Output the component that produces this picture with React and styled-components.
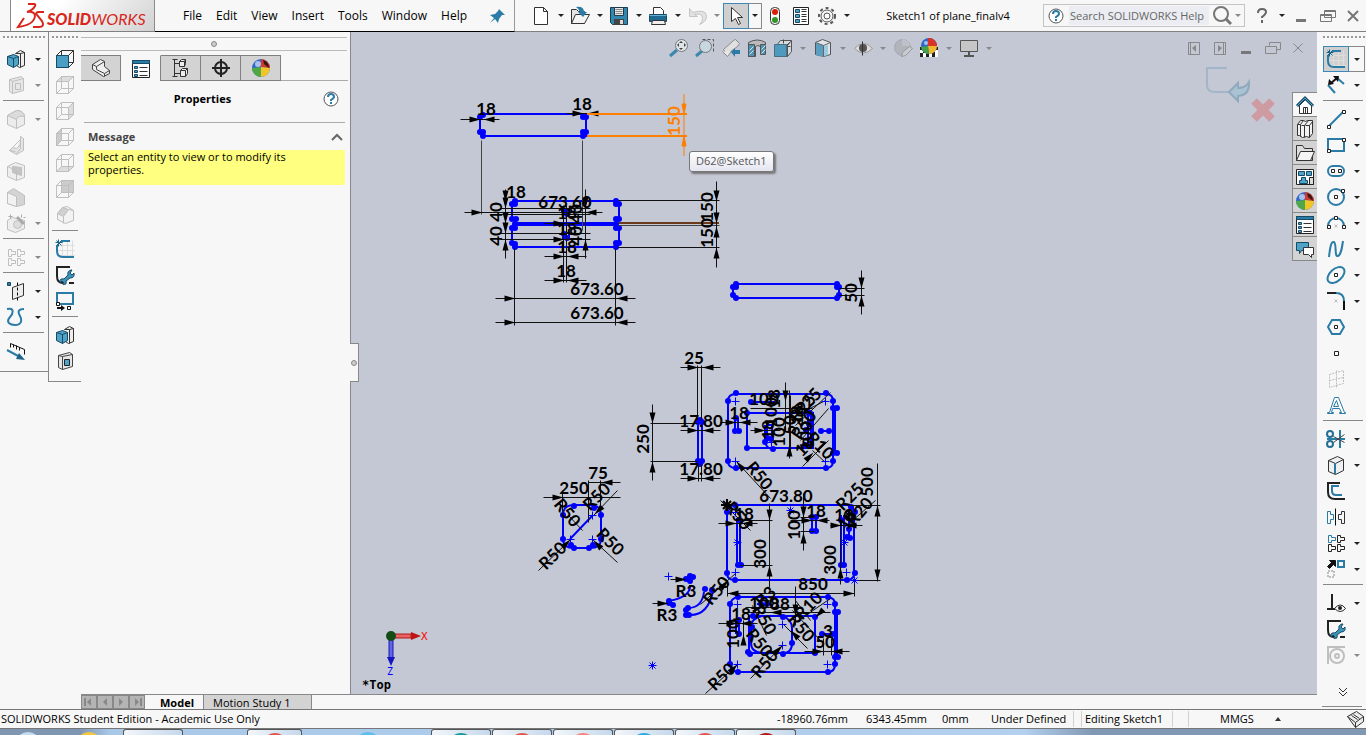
import React from "react";
import styled, { createGlobalStyle } from "styled-components";

const BLUE = "#2a7ca6";
const DARK = "#333";
const PALE = "#bfbfbf";
const INK = "#0000ff";

const GlobalStyle = createGlobalStyle`
  * { box-sizing: border-box; }
  body { margin: 0; overflow: hidden; }
  button { border: 0; padding: 0; margin: 0; background: none; font: inherit; color: inherit; }
`;

const Page = styled.div`
  display: flex;
  flex-direction: column;
  height: 100vh;
  background: #f7f7f7;
  color: #000;
  font: 12px/16px "Open Sans", "Noto Sans", sans-serif;
`;

/* ---------- icons ---------- */

const box = "M3 7h11v11H3zM3 7l4-5h11v11l-4 5M14 7l4-5";
const cubeLines = "M1 6h12v12H1zM1 6l5-5h12v12l-5 5M13 6l5-5M6 1v12h12M6 13l-5 5";
const tee = (x, y) => `M${x} ${y}h3v2h4v3h-4v2h-3z`;

const icons = {
  extrude: (
    <>
      <path d="M9 4l5-3 4 2v13l-5 2-3-2" fill="#eee" stroke={DARK} />
      <path d="M14 4v14M14 4l4-1M9 4l5 0" fill="none" stroke={DARK} />
      <path d="M1 7l6-2 5 2v8l-5 3-6-3z" fill="#4fa3c7" stroke="#174a66" />
      <path d="M1 7l6 2 5-2M7 9v9" fill="none" stroke="#174a66" />
    </>
  ),
  cutGrey: (
    <>
      <path d="M3 4l12-3 2 2v12l-11 3-3-2z" fill="#e6e6e6" stroke={PALE} />
      <path d="M6 6l11-3M6 6v12M3 4l3 2M9 8h5v6H9z" fill="none" stroke={PALE} />
    </>
  ),
  cut: (
    <>
      <path d="M3 4l11-3 3 2v12l-10 3-4-2z" fill="#e6e6e6" stroke="#444" />
      <path d="M7 5l10-2M7 5v13M3 4l4 1" fill="none" stroke="#444" />
      <path d="M9 8h5v6H9z" fill="#4fa3c7" stroke="#222" />
    </>
  ),
  fillet3d: (
    <>
      <path d="M1 6l9-5c5 0 8 3 8 6v8l-8 4-9-4z" fill="#ececec" stroke={PALE} />
      <path d="M1 6l9-5c5 0 8 3 8 6-4-1-7 0-8 3z" fill="#dcdcdc" stroke={PALE} />
      <path d="M10 10v9" stroke={PALE} />
    </>
  ),
  rib: <path d="M14 1l3 2v12l-7 4-7-4 3-3 4 1 4-4zM14 1v12l-4 5M6 12l8-8M3 15l6 1" fill="#e4e4e4" stroke={PALE} />,
  shell: (
    <>
      <path d="M1 5l8-4 9 3v12l-8 3-9-4z" fill="#eee" stroke={PALE} />
      <path d="M6 5l9 1v8l-9-3z" fill="#c4c4c4" stroke={PALE} />
      <path d="M1 5l9 4v10" fill="none" stroke={PALE} />
    </>
  ),
  draft: (
    <>
      <path d="M1 5l6-4 11 7v9l-8 2-9-3z" fill="#d4d4d4" stroke={PALE} />
      <path d="M1 5l9 4v10l-9-3z" fill="#f2f2f2" stroke={PALE} />
    </>
  ),
  hole: (
    <>
      <path d="M1 7l5-3 12 3v8l-9 4-8-3z" fill="#eee" stroke={PALE} />
      <circle cx="11" cy="11" r="4" fill="#ddd" stroke={PALE} />
      <path d="M11 4l7 7" stroke="#aaa" strokeWidth="3" />
      <path d="M4 1v4M2 3h4M15 1v3M17 4h2" stroke="#aaa" />
    </>
  ),
  patternGrey: (
    <path d={tee(2, 2) + tee(11, 2) + tee(2, 11) + tee(11, 11)} fill="none" stroke={PALE} />
  ),
  plane: (
    <>
      <path d="M6 6l11-4v12L6 18z" fill="#ededed" stroke={DARK} />
      <path d="M11 1v18" stroke="#000" strokeDasharray="3 2" />
      <path d="M1 1h3v3H1z" fill={BLUE} stroke="#174a66" />
    </>
  ),
  curve: <path d="M1 2c8-2 6 5 3 8-5 6 1 8 5 8 7 0 7-5 5-9-3-5-1-7 4-7" fill="none" stroke={BLUE} strokeWidth="2" />,
  measure: (
    <>
      <path d="M4 6V2l14 6v5M7 3v3M10 4v4M13 6v3" fill="none" stroke="#111" />
      <path d="M1 9l13 7" stroke={BLUE} strokeWidth="2" />
      <path d="M13 12l6 7-9-1z" fill="#1f6488" />
    </>
  ),
  cubeFront: (
    <>
      <path d={cubeLines} fill="none" stroke={DARK} />
      <path d="M1 6h12v12H1z" fill="#4c9fc4" stroke="#174a66" />
    </>
  ),
  cubeTop: <><path d="M1 6l5-5h12l-5 5z" fill="#ddd" stroke={PALE} /><path d={cubeLines} fill="none" stroke={PALE} /></>,
  cubeRight: <><path d="M13 6l5-5v12l-5 5z" fill="#ddd" stroke={PALE} /><path d={cubeLines} fill="none" stroke={PALE} /></>,
  cubeLeft: <><path d="M1 6l5-5v12l-5 5z" fill="#ccc" stroke={PALE} /><path d={cubeLines} fill="none" stroke={PALE} /></>,
  cubeBottom: <><path d="M1 18l5-5h12l-5 5z" fill="#ddd" stroke={PALE} /><path d={cubeLines} fill="none" stroke={PALE} /></>,
  cubeBack: <><path d="M6 1h12v12H6z" fill="#ccc" stroke={PALE} /><path d={cubeLines} fill="none" stroke={PALE} /></>,
  iso: (
    <>
      <path d="M2 8l5-6 5-1 6 4v10l-8 3-8-4z" fill="#f2f2f2" stroke={PALE} />
      <path d="M2 8l5-6 6 2-5 7z" fill="#d0d0d0" stroke={PALE} />
      <path d="M13 4l5 1M8 11l0 7" fill="none" stroke={PALE} />
    </>
  ),
  sketch: (
    <>
      <path d="M7 1v17M12 1v17M17 1v17M2 6h17M2 11h17M2 16h17" stroke="#ddd" />
      <path d="M6 2h9M2 6v6q0 6 6 6h11" fill="none" stroke={BLUE} strokeWidth="2" />
      <path d="M0 3h7M3 0v7M1 1l5 5M6 1L1 6" stroke="#1b6288" />
    </>
  ),
  repair: (
    <>
      <path d="M15 2H2v9q0 7 6 7M14 18h5" fill="none" stroke="#222" strokeWidth="2" />
      <path
        d="M9 14l4-4q-1-4 3-5l1 0-2 3 2 2 2-2q1 5-4 5l-4 3q1 4-3 4l1-2-2-2-2 2q-1-5 4-4z"
        fill="#3f93b9"
        stroke="#174a66"
        strokeWidth="1"
      />
    </>
  ),
  convert: (
    <>
      <path d="M2 2h16v11H2z" fill="none" stroke={BLUE} strokeWidth="2" />
      <path d="M1 11h3v3H1zM12 15h3v3h-3z" fill="#fff" stroke="#111" />
      <path d="M2 16h4v-2l4 3-4 3v-2H2z" fill="#111" />
    </>
  ),
  dimension: (
    <>
      <path d="M10 2l8 7M2 10l7 8" stroke={BLUE} strokeWidth="2" />
      <path d="M4 9l7-6" stroke="#111" strokeWidth="2" />
      <path d="M2 10l1-6 5 5zM7 1h6l-1 6z" fill="#111" />
    </>
  ),
  line: (
    <>
      <path d="M2 18L18 2" stroke={BLUE} strokeWidth="2" />
      <path d="M1 16h3v3H1zM16 1h3v3h-3z" fill="#fff" stroke="#222" />
    </>
  ),
  rect: (
    <>
      <path d="M2 4h16v12H2z" fill="none" stroke={BLUE} strokeWidth="2" />
      <path d="M1 14h3v3H1zM16 3h3v3h-3z" fill="#fff" stroke="#222" />
    </>
  ),
  slot: (
    <>
      <rect x="2" y="5" width="16" height="10" rx="5" fill="none" stroke={BLUE} strokeWidth="2" />
      <path d="M5 8h3v3H5zM12 8h3v3h-3z" fill="#fff" stroke="#222" />
    </>
  ),
  circle: (
    <>
      <circle cx="10" cy="10" r="8" fill="none" stroke={BLUE} strokeWidth="2" />
      <path d="M8 8h3v3H8zM15 2h3v3h-3z" fill="#fff" stroke="#222" />
    </>
  ),
  arc: (
    <>
      <path d="M2 13a8 8 0 0 1 16 0" fill="none" stroke={BLUE} strokeWidth="2" />
      <path d="M8 3h3v3H8zM1 12h3v3H1zM16 12h3v3h-3z" fill="#fff" stroke="#222" />
      <path d="M8 11l3 3M11 11l-3 3" stroke="#bbb" />
    </>
  ),
  spline: <path d="M3 18C4 9 5 2 8 3c3 2 0 15 4 14 3-1 4-8 5-15" fill="none" stroke={BLUE} strokeWidth="2" />,
  ellipse: (
    <>
      <ellipse cx="10" cy="10" rx="10" ry="6" transform="rotate(-42 10 10)" fill="none" stroke={BLUE} strokeWidth="2" />
      <path d="M8 8h3v3H8z" fill="#fff" stroke="#222" />
    </>
  ),
  fillet: (
    <>
      <path d="M1 2h9" stroke="#222" strokeWidth="2" />
      <path d="M10 2q8 0 8 8" fill="none" stroke={BLUE} strokeWidth="2" />
      <path d="M18 10v9" stroke="#111" strokeWidth="2" />
      <path d="M8 8l3 3M11 8l-3 3" stroke="#bbb" />
    </>
  ),
  polygon: (
    <>
      <path d="M6 3h8l4 7-4 7H6l-4-7z" fill="none" stroke={BLUE} strokeWidth="2" />
      <path d="M8 8h3v3H8z" fill="#fff" stroke="#222" />
    </>
  ),
  point: <path d="M8 8h4v4H8z" fill="#fff" stroke="#222" />,
  planeGrey: <path d="M3 5l14-4v13L3 18zM10 1v18M3 11l14-3" fill="none" stroke={PALE} strokeDasharray="2 1" />,
  text: <path d="M1 18h6v-1l-2-0 1-4h7l2 4-2 0v1h6v-1h-1L12 2H8L3 17H1zM7 11l3-6 2 6z" fill="#fff" stroke={BLUE} />,
  trim: (
    <>
      <path d="M1 10h18M14 1v18" stroke={BLUE} strokeWidth="2" />
      <path d="M7 7l11 6M7 13l11-8" stroke="#444" />
      <circle cx="4" cy="5" r="3" fill="none" stroke="#236f96" strokeWidth="2" />
      <circle cx="4" cy="15" r="3" fill="none" stroke="#236f96" strokeWidth="2" />
    </>
  ),
  solid: (
    <>
      <path d="M2 5l9-4 6 3v11l-8 4-7-3z" fill="#f0f0f0" stroke="#333" />
      <path d="M2 5l7 3 8-4" fill="none" stroke="#333" />
      <path d="M9 8v11" stroke={BLUE} strokeWidth="2" />
    </>
  ),
  offset: (
    <>
      <path d="M14 2H2v9q0 7 7 7h10" fill="none" stroke="#222" strokeWidth="2" />
      <path d="M13 5H6v5q0 4 4 4h6" fill="none" stroke={BLUE} strokeWidth="2" />
    </>
  ),
  mirror: (
    <>
      <path d="M1 4h3v3h3v5H4v4H1z" fill="none" stroke={BLUE} />
      <path d="M18 4h-3v3h-3v5h3v4h3z" fill="none" stroke="#333" />
      <path d="M9 1v17" stroke="#111" />
    </>
  ),
  pattern: (
    <>
      <path d={tee(2, 2)} fill="none" stroke={BLUE} />
      <path d={tee(11, 2) + tee(2, 11) + tee(11, 11)} fill="none" stroke="#222" />
    </>
  ),
  move: (
    <>
      <path d="M1 7l4-4-2-2h6v6L7 5 3 9z" fill="#111" stroke="#111" />
      <path d="M12 2h6v6h-6z" fill="none" stroke={BLUE} strokeWidth="2" />
      <path d="M2 12h6v6H2z" fill="none" stroke={PALE} strokeWidth="2" strokeDasharray="2 1" />
    </>
  ),
  relations: (
    <>
      <path d="M6 1v15M1 16h8" stroke="#222" strokeWidth="2" />
      <path d="M8 15q6-7 11 0-5 6-11 0z" fill="#fff" stroke="#222" />
      <circle cx="14" cy="15" r="2" fill="#222" />
    </>
  ),
  ringGrey: (
    <>
      <path d="M2 19V2h17" fill="none" stroke={PALE} strokeWidth="2" />
      <circle cx="11" cy="11" r="7" fill="none" stroke={PALE} strokeWidth="2" />
      <circle cx="11" cy="11" r="2" fill="none" stroke={PALE} strokeWidth="2" />
    </>
  ),
  newDoc: <path d="M3 1h9l4 4v13H3zM12 1v4h4" fill="#fff" stroke="#333" />,
  open: (
    <>
      <path d="M1 17V3h5l2 2h6v12z" fill="#e4e4e4" stroke="#333" />
      <path d="M1 17L5 8h14l-5 9z" fill="#f4f4f4" stroke="#333" />
      <path d="M6 1q8-1 8 5h3l-4 5-5-5h2q-1-3-4-5z" fill={BLUE} />
    </>
  ),
  save: (
    <>
      <path d="M1 1h17v17H3l-2-2z" fill="#3187ae" stroke="#1c3c4e" />
      <path d="M5 1h9v8H5z" fill="#e6e6e6" stroke="#1c3c4e" />
      <path d="M6 3h7M6 5h7M6 7h7" stroke="#888" />
      <path d="M5 13h10v6H5z" fill="#444" />
      <path d="M11 14h3v4h-3z" fill="#ddd" />
    </>
  ),
  print: (
    <>
      <path d="M5 9V1h7l3 3v5z" fill="#fff" stroke="#333" />
      <path d="M1 8h17v7H1z" fill="#1f6a90" stroke="#174a66" />
      <path d="M1 9h17" stroke="#61b2d2" />
      <path d="M4 14h12l1 4H3z" fill="#eee" stroke="#333" />
    </>
  ),
  undo: <path d="M2 2v8h8L7 8q8-2 8 4 0 3-3 6 7-3 7-8 0-8-14-4z" fill="#e2e2e2" stroke="#c4c4c4" />,
  cursor: <path d="M5 1v14l4-3 3 6 2-1-3-6h5z" fill="#fff" stroke="#333" />,
  traffic: (
    <>
      <rect x="5" y="1" width="9" height="17" rx="4" fill="#f7f7f7" stroke="#333" />
      <circle cx="10" cy="6" r="3" fill="#d81e05" />
      <circle cx="10" cy="14" r="3" fill="#2f9626" />
    </>
  ),
  options: (
    <>
      <path d="M2 1h15v17H2z" fill="#fff" stroke="#222" />
      <path d="M4 3h4v3H4zM4 8h4v3H4zM4 13h4v3H4z" fill="#4fa3c7" stroke="#174a66" />
      <path d="M10 3h5M10 5h5M10 8h5M10 10h5M10 13h5M10 15h5" stroke="#333" />
    </>
  ),
  gear: (
    <>
      <circle cx="10" cy="10" r="8" fill="none" stroke="#555" strokeDasharray="3 3" strokeWidth="2" />
      <circle cx="10" cy="10" r="6" fill="#f7f7f7" stroke="#555" strokeWidth="1" />
      <circle cx="10" cy="10" r="3" fill="#fff" stroke="#555" strokeWidth="1" />
    </>
  ),
  pin: <path d="M11 3l6 6-3 0-3 4-1 4-3-4-5 4 4-5-4-3 5-1 3-3z" fill={BLUE} />,
  help: (
    <>
      <circle cx="10" cy="10" r="7" fill="#fff" stroke="#555" strokeWidth="1" />
      <path d="M7 8q0-3 3-3t3 3q0 1-3 3v1M10 13v2" fill="none" stroke={BLUE} strokeWidth="2" />
    </>
  ),
  query: <path d="M6 7q0-4 4-4t4 3q0 2-4 5v1M10 14v3" fill="none" stroke="#666" strokeWidth="2" />,
  glass: (
    <>
      <circle cx="9" cy="8" r="7" fill="none" stroke="#777" strokeWidth="2" />
      <path d="M14 13l5 5" stroke="#777" strokeWidth="3" />
    </>
  ),
  minimize: <path d="M5 13h10v3H5z" fill="#777" />,
  restore: <path d="M7 4h11v7H7zM7 5h11M3 8h11v7H3zM3 9h11" fill="#f7f7f7" stroke="#777" />,
  restoreClear: <path d="M7 7V4h11v7h-4M3 8h11v7H3z" fill="none" stroke="#888" />,
  close: <path d="M5 5l10 10M15 5L5 15" stroke="#777" strokeWidth="2" />,
  closeThin: <path d="M5 5l9 9M14 5L5 14" stroke="#888" />,
  paneLeft: <><path d="M4 4h11v12H4zM6 4v12" fill="none" stroke="#888" /><path d="M12 7v7l-4-4z" fill="#888" /></>,
  paneRight: <><path d="M4 4h11v12H4zM13 4v12" fill="none" stroke="#888" /><path d="M8 7v7l4-4z" fill="#888" /></>,
  zoomFit: (
    <>
      <path d="M1 18l7-6" stroke="#3d87aa" strokeWidth="3" />
      <circle cx="12" cy="7" r="6" fill="#dde4ea" stroke="#777" />
      <path d="M12 3l2 2h-4zM12 12l2-2h-4zM8 7l2-2v4zM17 7l-2-2v4z" fill="#444" />
    </>
  ),
  zoomArea: (
    <>
      <path d="M7 1h11v12" fill="none" stroke="#555" strokeDasharray="3 2" />
      <path d="M1 18l6-5" stroke="#3d87aa" strokeWidth="3" />
      <circle cx="10" cy="8" r="6" fill="#c8d6df" stroke="#777" />
    </>
  ),
  prevView: (
    <>
      <path d="M2 11l10-9 2-1 4 4-2 3-11 8z" fill="#e0e0e0" stroke="#888" />
      <path d="M1 13l5 5 4-5" fill="#e8e8e8" stroke="#888" />
      <path d="M10 14l4-4v2h5v4h-5v3z" fill={BLUE} />
    </>
  ),
  section: (
    <>
      <path d="M1 4q9-5 17 0v11h-5V8q-3-2-5 0v10H1z" fill="#bbb" stroke="#555" />
      <path d="M1 6h6v12H1zM13 6h5v10h-5z" fill="#4e93b3" stroke="#555" />
      <path d="M2 12l4-4M2 16l4-4M14 11l4-4M14 15l4-4" stroke="#d7e8f0" />
    </>
  ),
  viewCube: (
    <>
      <path d={box} fill="#d5dade" stroke="#555" />
      <path d="M1 6h12v12H1z" fill="#4e9abf" stroke="#4a6f85" />
      <path d="M10 1v4M17 8h-3M16 4l-3 3" stroke="#444" />
    </>
  ),
  display: (
    <>
      <path d="M2 4l7-3 8 3v12l-7 2-8-2z" fill="#dfe5e8" stroke="#555" />
      <path d="M3 5l7 2v12l-7-2z" fill="#5a9fbf" />
      <path d="M11 8l4-1v10l-4 1z" fill="#9ccae0" />
      <path d="M10 7v11M10 7l7-3M2 4l8 3" fill="none" stroke="#666" />
    </>
  ),
  eye: (
    <>
      <path d="M1 10q9-10 18 0-9 9-18 0z" fill="#ddd" stroke="#999" />
      <circle cx="10" cy="10" r="4" fill="#555" />
      <path d="M9 3v14" stroke="#333" />
    </>
  ),
  ballEdit: (
    <>
      <circle cx="9" cy="9" r="8" fill="#b0b4bb" stroke="#a4a8b0" />
      <path d="M9 1q8 1 8 8-4-2-8-1z" fill="#bec1c8" />
      <path d="M8 18l1-4 7-6 3 2-7 7z" fill="#c9ccd3" stroke="#999" />
    </>
  ),
  scene: (
    <>
      <path d="M1 9h18v10H1z" fill="#fff" />
      <path d="M1 9h3v3H1zM16 9h3v3h-3zM4 12h3v3H4zM13 12h3v3h-3zM1 15h3v4H1zM7 15h3v4H7zM13 15h3v4h-3z" fill="#222" />
      <circle cx="10" cy="8" r="8" fill="#2e67c6" />
      <path d="M9 8V0a8 8 0 0 1 9 8z" fill="#d93226" />
      <path d="M9 8h9a8 8 0 0 1-8 8z" fill="#f0b92c" />
      <path d="M9 8l1 8a8 8 0 0 1-8-7z" fill="#45a047" />
      <circle cx="7" cy="5" r="2" fill="#dce8fa" opacity="0.7" />
    </>
  ),
  monitor: (
    <>
      <path d="M1 2h17v11H1z" fill="#c6c6c6" stroke="#555" />
      <path d="M10 14v4M5 18h10" stroke="#555" strokeWidth="2" />
    </>
  ),
  ball: (
    <>
      <circle cx="10" cy="10" r="9" fill="#3169d0" />
      <path d="M10 1a9 9 0 0 1 9 9L10 9z" fill="#d33a2c" />
      <path d="M19 10a9 9 0 0 1-9 9V9z" fill="#f3c628" />
      <path d="M1 10l9-1v10a9 9 0 0 1-9-9z" fill="#4fa845" />
      <path d="M12 2q6 2 6 8l-5-4z" fill="#3b1512" />
      <circle cx="7" cy="6" r="3" fill="#dce8fa" opacity="0.7" />
    </>
  ),
  part: (
    <>
      <path d="M1 6l8-5 4 2v5l5 4v3l-6 3L1 11z" fill="#eee" stroke="#444" />
      <path d="M1 6l4 2 8-5M5 8v3l8 4 5-3M13 15v3" fill="none" stroke="#444" />
    </>
  ),
  list: (
    <>
      <path d="M1 1h17v17H1z" fill="#fff" stroke="#222" />
      <path d="M1 1h17v3H1z" fill={BLUE} stroke="#174a66" />
      <path d="M3 7h3v2H3zM3 11h3v2H3zM3 15h3v2H3z" fill="#4fa3c7" stroke="#174a66" />
      <path d="M8 8h8M8 12h8M8 16h8" stroke="#333" />
    </>
  ),
  config: (
    <>
      <path d="M3 1v17M3 5h5M3 15h6M1 1h5M1 18h5" fill="none" stroke="#333" />
      <path d="M8 3l2-2h4v4l-1 3H8zM9 12l2-2h5v5l-2 3H9z" fill="#eee" stroke="#333" />
      <path d="M8 3h5v5M13 3l1-2M9 12h5v6M14 12l2-2" fill="none" stroke="#333" />
    </>
  ),
  target: (
    <>
      <circle cx="10" cy="10" r="6" fill="none" stroke="#222" strokeWidth="2" />
      <path d="M10 1v18M1 10h18" stroke="#222" strokeWidth="2" />
    </>
  ),
  home: (
    <>
      <path d="M4 10v8h12v-8l-6-6z" fill="#fff" stroke="#333" />
      <path d="M2 11l8-8 8 8" fill="none" stroke="#174a66" strokeWidth="3" />
      <path d="M2 11l8-8 8 8" fill="none" stroke="#4fa3c7" strokeWidth="1" />
      <path d="M8 18v-6h4v6M10 12v6" fill="none" stroke="#333" />
    </>
  ),
  books: (
    <>
      <path d="M2 5l3-4h3l2 1 2-1h5v13l-3 4-3-1-4 1-3-2-2 0z" fill="#f2f2f2" stroke="#333" />
      <path d="M2 5h3v12M5 5l3-4M6 6h3v12M9 6l4-5M10 6h4v12M14 6l3-4" fill="none" stroke="#333" />
    </>
  ),
  folder: (
    <>
      <path d="M1 17V2h6l2 3h8v12z" fill="#ddd" stroke="#333" />
      <path d="M1 17L5 8h14l-4 9z" fill="#f4f4f4" stroke="#333" />
    </>
  ),
  palette: (
    <>
      <path d="M1 2h17v15H1z" fill="#fff" stroke="#222" />
      <path d="M3 4h6v4H3zM11 4h5v4h-5zM6 10h4v3h2v3H4v-3h2z" fill="#4fa3c7" stroke="#174a66" />
      <path d="M14 10h4v7h-4z" fill="#ddd" stroke="#222" />
    </>
  ),
  forum: (
    <>
      <path d="M1 3h12v8H6l-2 3v-3H1z" fill="#4fa3c7" stroke="#174a66" />
      <path d="M8 8h10v7h-2v3l-3-3H8z" fill="#fff" stroke="#333" />
    </>
  ),
  tag: (
    <>
      <path d="M2 7l9-5 7 5v5l-8 6z" fill="#eee" stroke="#333" />
      <path d="M2 7l8 6 8-6M10 13v5" fill="none" stroke="#333" />
      <path d="M6 6l6 4M8 5l6 4" stroke="#333" />
    </>
  ),
};

const Svg = styled.svg`
  display: block;
  flex: none;
`;

// hairlines sit on half pixels so that they stay sharp
const Glyph = styled(Svg)`
  [stroke]:not([stroke-width]) { transform: translate(0.5px, 0.5px); }
`;

const Icon = ({ name }) => (
  <Glyph width="20" height="20" viewBox="0 0 20 20" aria-hidden="true">
    {icons[name]}
  </Glyph>
);

const Caret = styled.span`
  width: 0;
  height: 0;
  border: 3px solid transparent;
  border-bottom-width: 0;
  border-top-color: ${p => (p.$muted ? "#888" : "#222")};
`;

/* ---------- title bar ---------- */

const TitleBar = styled.header`
  display: flex;
  flex: none;
  height: 32px;
  border-bottom: 1px solid #808080;
`;

const Logo = styled.div`
  display: flex;
  align-items: center;
  width: 145px;
  margin-left: 10px;
  border: solid #8a8a8a;
  border-width: 0 1px;
  background: linear-gradient(135deg, #fff 30%, #d2d2d2);
  color: #d9261c;
  font: italic 400 16px/30px Lato, sans-serif;
  b { font-weight: 900; }
  span { margin-top: 7px; }
`;

const Menu = styled.nav`
  display: flex;
  align-items: center;
  gap: 14px;
  width: 360px;
  height: 32px;
  padding: 0 6px 0 28px;
  border-bottom: 1px solid #000;
  border-right: 1px solid #999;
  button:last-child { margin-left: auto; }
`;

const Tools = styled.div`
  display: flex;
  align-items: center;
  margin-left: ${p => p.$gap}px;
`;

const Tool = styled.button`
  display: flex;
  align-items: center;
  justify-content: center;
  width: 26px;
  height: 26px;
  flex: none;
  ${p => p.$on && "background: #d0d0d0; border: 1px solid #3c88b8;"}
`;

const Drop = styled.button`
  display: flex;
  align-items: center;
  justify-content: center;
  width: ${p => p.$w || 13}px;
  height: 26px;
  flex: none;
  ${p => p.$on && "border: 1px solid #888; border-left: 0;"}
`;

const DocName = styled.h1`
  flex: 1;
  margin: 0;
  text-align: center;
  font-size: 11px;
  font-weight: 400;
  line-height: 31px;
  white-space: nowrap;
`;

const Search = styled.label`
  display: flex;
  align-items: center;
  gap: 3px;
  width: 202px;
  height: 23px;
  margin-top: 4px;
  padding-left: 2px;
  border: 1px solid #c4c4c4;
  input {
    width: 140px;
    height: 19px;
    border: 0;
    padding: 0 1px;
    background: #ebedf2;
    font: 11px "Open Sans", sans-serif;
    outline: 0;
  }
  input::placeholder { color: #666; opacity: 1; }
`;

/* ---------- side toolbars ---------- */

const Body = styled.main`
  display: flex;
  flex: 1;
  min-height: 0;
`;

const Bar = styled.div`
  display: flex;
  flex-direction: column;
  align-self: flex-start;
  flex: none;
  width: ${p => p.$w}px;
  padding: 4px 0 ${p => (p.$flat ? 0 : 7)}px ${p => p.$pad}px;
  ${p => !p.$flat && "border-bottom: 1px solid #888;"}
  ${p => p.$edge && "border-right: 1px solid #888;"}
  ${p => p.$left && "border-left: 1px solid #888; margin-left: -1px;"}
`;

const Grip = styled.div`
  width: ${p => p.$w}px;
  height: 2px;
  margin-bottom: 8px;
  background: repeating-linear-gradient(90deg, #999 0 2px, transparent 2px 4px);
`;

const BarRow = styled.div`
  display: flex;
  height: 26px;
`;

const BarRule = styled.hr`
  width: ${p => p.$w}px;
  height: 1px;
  margin: 2px 0 5px;
  border: 0;
  background: #888;
`;

const RightDock = styled.div`
  display: flex;
  flex-direction: column;
  justify-content: space-between;
  align-items: center;
  width: 49px;
  flex: none;
  padding-bottom: 2px;
`;

const More = styled.button`
  width: 40px;
  height: 24px;
  padding-bottom: 6px;
  border-bottom: 1px solid #888;
`;

/* ---------- property panel ---------- */

const Center = styled.div`
  display: flex;
  flex-direction: column;
  flex: 1;
  min-width: 0;
`;

const Work = styled.div`
  display: flex;
  flex: 1;
  min-height: 0;
`;

const Panel = styled.section`
  position: relative;
  width: 270px;
  flex: none;
  border-right: 1px solid #888;
  padding-top: 5px;
`;

const PanelGrip = styled.div`
  display: flex;
  align-items: center;
  justify-content: center;
  height: 14px;
  margin-right: 3px;
  border: solid #bbb;
  border-width: 1px 0;
`;

const Dot = styled.i`
  width: 6px;
  height: 6px;
  border: 1px solid #888;
  border-radius: 50%;
  background: #ccc;
`;

const PanelTabs = styled.div`
  display: flex;
  height: 26px;
  margin: 4px 2px 0 0;
  &::after { content: ""; flex: 1; border-bottom: 1px solid #aaa; }
`;

const PanelTab = styled.button`
  display: flex;
  align-items: center;
  justify-content: center;
  width: 40px;
  border: 1px solid #808080;
  border-left: 0;
  background: #d3d3d3;
  ${p => p.$on && "background: none; border-bottom: 0; border-top-color: transparent;"}
`;

const PanelTitle = styled.div`
  display: grid;
  grid-template-columns: 1fr 24px;
  align-items: center;
  height: 42px;
  margin: 0 5px 0 3px;
  padding-bottom: 6px;
  border-bottom: 1px solid #aaa;
  h2 { margin: 0; font-size: 11px; text-align: center; }
`;

const MessageHead = styled.div`
  display: flex;
  justify-content: space-between;
  align-items: center;
  height: 27px;
  padding: 1px 3px 1px 7px;
  margin-right: 4px;
  color: #444;
  h3 { margin: 0; font-size: 11px; }
`;

const Message = styled.p`
  height: 35px;
  margin: 0 5px 0 3px;
  padding: 0 4px;
  background: #ffff80;
  font-size: 11px;
  line-height: 13px;
`;

const Splitter = styled.button`
  position: absolute;
  z-index: 1;
  left: 269px;
  top: 47%;
  display: flex;
  align-items: center;
  justify-content: center;
  width: 9px;
  height: 39px;
  border: 1px solid #888;
  border-left: 0;
  background: #f7f7f7;
`;

/* ---------- graphics area ---------- */

const Viewport = styled.section`
  position: relative;
  flex: 1;
  min-width: 0;
  overflow: hidden;
  background: #c4c8d4;
`;

const Canvas = styled.svg`
  position: absolute;
  top: 0;
  left: 0;
`;

const ViewBar = styled.div`
  position: absolute;
  top: 3px;
  left: 0;
  right: 6px;
  display: flex;
  justify-content: space-between;
`;

const HeadsUp = styled.div`
  display: flex;
  margin: 0 auto;
  padding-left: 130px;
`;

const Corner = styled.div`
  position: absolute;
  top: 32px;
  right: 38px;
`;

const Tooltip = styled.div`
  position: absolute;
  left: 338px;
  top: 119px;
  padding: 1px 6px 2px;
  border: 1px solid #777;
  border-radius: 3px;
  background: linear-gradient(#fff, #e4e5f0);
  box-shadow: 2px 2px 2px #777;
  color: #555;
  font-size: 11px;
`;

const TaskPane = styled.div`
  position: absolute;
  top: 60px;
  right: 0;
  border-top: 1px solid #888;
`;

const TaskTab = styled.button`
  display: flex;
  align-items: center;
  justify-content: center;
  width: 25px;
  height: 24px;
  border: solid #888;
  border-width: 0 0 1px 1px;
  background: ${p => (p.$on ? "#f7f7f7" : "#d3d3d3")};
`;

/* ---------- sketch ---------- */

const Label = styled.text`
  font: 700 17px Lato, sans-serif;
  text-anchor: middle;
  dominant-baseline: central;
`;

// text, centre x, centre y, rotation
const labels = [
  ["18", 486, 109], ["18", 582, 104], ["18", 516, 192], ["673.60", 565, 202],
  ["40", 496, 212, -90], ["40", 496, 236, -90], ["150", 707, 207, -90], ["150", 707, 233, -90],
  ["18", 567, 213], ["40", 576, 214, -90], ["18", 567, 229], ["40", 576, 236, -90], ["18", 567, 247],
  ["18", 566, 271], ["673.60", 597, 289], ["673.60", 597, 313], ["50", 851, 293, -90],
  ["25", 694, 358], ["17.80", 701, 421], ["17.80", 701, 469], ["250", 643, 439, -90],
  ["100", 764, 399], ["18", 739, 413], ["18", 774, 399, -90], ["100", 771, 412, -90],
  ["100", 779, 432, -90], ["18", 768, 430, -90], ["50", 790, 425, -90], ["18", 797, 415, -90],
  ["R25", 803, 408, -50], ["R25", 808, 402, -45], ["R50", 804, 425, -55], ["100", 806, 436, -90],
  ["18", 805, 447, -45], ["R10", 820, 446, 45], ["R50", 759, 476, 50],
  ["75", 598, 473], ["250", 574, 488], ["R50", 567, 513, 50], ["R50", 597, 497, -45],
  ["R50", 610, 542, 45], ["R50", 553, 556, -45],
  ["673.80", 786, 496], ["18", 744, 514], ["R50", 738, 516, 50], ["300", 760, 554, -90],
  ["100", 794, 525, -90], ["18", 816, 511], ["300", 830, 560, -90], ["R25", 850, 497, -45],
  ["R20", 860, 512, -50], ["18", 844, 515], ["18", 848, 520, -60], ["500", 867, 482, -90],
  ["850", 813, 584], ["R3", 686, 591], ["R3", 667, 615], ["R50", 717, 591, -50],
  ["R3", 766, 597, -45], ["100", 764, 603], ["8", 775, 604], ["8", 785, 604], ["18", 741, 614],
  ["100", 733, 634, -90], ["R50", 764, 620, 60], ["R50", 759, 643, 50], ["R10", 809, 606, -45],
  ["R50", 801, 628, 50], ["3", 828, 631], ["50", 825, 642], ["R50", 765, 664, -50],
  ["R50", 722, 677, -45],
];

const blueLines = `
  M480 117V132M483 114H586V136H483M586 117V132
  M512 203V220M515 201H616M619 203V219M514 223H618M514 225H618M512 228V243M619 228V243M515 247H616
  M563 210h6v4h-6zM563 233h6v5h-6z
  M736 284H837M736 298H837M733 287V295M839 287V295
  M698 422V461M702 422V461
  M736 394H826Q833 394 833 401V461Q833 468 826 468H736Q728 468 728 461V401Q728 394 736 394M835 408V453
  M747 413V448H813V413H747M751 402H775M735 418V430M738 418V430M765 425V441Q766 449 773 449M767 425h5v15h-5z
  M808 410V449M811 410V448M820 431H830
  M574 505H590Q601 505 601 515V539Q601 548 590 548H574Q563 548 563 539V515Q563 505 574 505M570 539L593 515
  M735 505H847Q854 506 854 513V573Q854 580 847 580H735Q727 580 727 573V512Q728 505 735 505
  M737 518V565M740 518V565M812 517V532M816 517V532M841 515V565M844 515V565M849 510V535
  M690 585Q691 597 669 601M704 592Q702 608 688 608M713 591Q708 616 689 615
  M738 597H828Q835 598 835 604V664Q835 672 828 672H738Q730 671 730 664V605Q731 598 738 597M837 612V657
  M749 653V616H815V653H749M762 616H783Q792 620 792 628V643Q792 653 783 653H762Q751 652 751 643V628Q751 618 762 616
  M739 620V634M736 620V634M757 604H767M822 634H833`;

const points = [
  [483, 115], [480, 117], [480, 132], [483, 132], [483, 136], [583, 117], [586, 117], [583, 132], [586, 132], [583, 136],
  [515, 201], [512, 204], [515, 204], [512, 219], [516, 219], [515, 224], [512, 228], [515, 228], [512, 243], [515, 244], [515, 247],
  [616, 201], [616, 204], [619, 204], [616, 219], [619, 219], [616, 224], [616, 228], [619, 228], [616, 243], [619, 243], [616, 247],
  [564, 211], [567, 214], [564, 234], [567, 238],
  [736, 284], [733, 287], [736, 287], [733, 295], [736, 298], [837, 284], [839, 287], [837, 287], [839, 295], [837, 298],
  [700, 420], [698, 422], [702, 422], [698, 461], [702, 461], [700, 464],
  [736, 393], [826, 393], [728, 401], [833, 401], [833, 408], [837, 408], [833, 453], [837, 453], [728, 461], [833, 461], [736, 468], [826, 468],
  [747, 413], [747, 448], [773, 449], [751, 402], [735, 431], [739, 431], [736, 418], [767, 438], [771, 439], [765, 442],
  [821, 431], [829, 431], [808, 412], [811, 414], [809, 424], [806, 430], [811, 446], [805, 445],
  [574, 506], [563, 515], [594, 508], [601, 515], [563, 539], [601, 539], [571, 545], [574, 548], [589, 548], [593, 545],
  [727, 512], [735, 505], [727, 573], [735, 580], [847, 580], [855, 573], [855, 512], [851, 507], [738, 565], [741, 565], [739, 520],
  [812, 517], [816, 517], [812, 531], [816, 531], [841, 520], [841, 565], [844, 565], [849, 529], [850, 538], [847, 537],
  [690, 576], [693, 577], [686, 579], [690, 581], [669, 601], [669, 603], [673, 605], [705, 589], [712, 590], [688, 608], [686, 610], [689, 615], [686, 615],
  [738, 597], [828, 597], [730, 604], [835, 604], [835, 612], [838, 612], [730, 664], [835, 664], [835, 657], [838, 657], [738, 672], [828, 672],
  [748, 652], [750, 654], [783, 654], [815, 653], [815, 617], [792, 643], [752, 627], [753, 616], [783, 617], [761, 604], [767, 604], [739, 634], [739, 620], [822, 634], [833, 634],
];

const crosses = [
  [735, 401], [735, 461], [825, 401], [825, 461], [771, 442], [592, 515], [570, 539], [592, 539], [668, 576],
  [735, 512], [735, 572], [846, 572], [737, 604], [827, 604], [737, 664], [827, 664], [782, 624], [782, 645],
];

const stars = [[737, 542], [854, 580], [844, 542], [790, 510], [652, 665]];

const blackLines = `
  M460 119H499M566 113H605M464 212H602M505 189V258M585 189V258
  M500 208H590M500 214H590M500 233H590M500 239H590M544 223H580
  M618 200H719M618 247H719M716 181V267M563 205V282M566 205V282M544 256H586M544 280H586M544 239H586
  M495 298H635M495 322H635M514 248V325M615 248V325
  M839 288H864M839 295H864M861 270V314
  M680 367H720M697 365V420M701 365V420M652 404V480M650 423H697M650 461H697M680 430H720M680 478H720M698 464V481M701 464V481
  M720 422H757M750 408H812M785 382V430M790 395V450M750 430H780M789 390V458
  M795 425L830 392M800 440L828 408M812 450L825 462M802 466L828 440M790 418L825 400M736 461L770 498
  M543 497H620M588 482H620M562 490V512M588 480V522M600 480V510M593 515L617 490M592 539L617 562M570 539L538 570M568 515L582 530
  M718 523H757M769 503V587M740 520H772M740 565H772M803 493V550M800 517H814M800 531H814M790 520H829M840 525V584
  M877 463V581M850 505H880M855 580H880M830 525H862M843 528L875 500M727 580V596M854 580V596M727 593H854
  M670 579H684M652 603H667M700 604L735 573M720 500L750 530
  M718 623H757M795 586V625M743 640V620M742 612H830M745 607H800M804 651H849M823 638V655M831 638V655
  M783 624L807 648M782 645L750 678M737 664L705 693M795 622L830 598M792 610L820 640M752 605L766 635M795 600L810 620`;

// tip x, tip y, direction in degrees (0 points right)
const arrows = [
  [480, 119, 0], [483, 119, 180], [583, 113, 0], [587, 113, 180], [482, 212, 0], [585, 212, 180],
  [505, 208, 90], [505, 223, 90], [505, 233, 90], [505, 239, 270], [505, 201, 90], [585, 208, 90], [585, 239, 270],
  [716, 201, 90], [716, 223, 90], [716, 226, 270], [716, 247, 270], [564, 256, 0], [567, 256, 180], [564, 280, 0], [567, 280, 180], [564, 223, 0], [564, 239, 0],
  [515, 298, 0], [616, 298, 180], [515, 322, 0], [616, 322, 180], [861, 288, 90], [861, 295, 270],
  [698, 367, 0], [702, 367, 180], [652, 423, 90], [652, 461, 270], [698, 430, 0], [702, 430, 180], [698, 478, 0], [702, 478, 180],
  [736, 422, 0], [739, 422, 180], [785, 401, 90], [765, 430, 0], [789, 445, 270], [813, 452, 315], [736, 461, 230],
  [563, 497, 0], [601, 482, 180], [594, 514, 135], [593, 540, 225], [570, 539, 315],
  [736, 523, 0], [741, 523, 180], [769, 520, 90], [769, 565, 270], [803, 517, 90], [803, 532, 270], [812, 520, 0], [816, 520, 180],
  [840, 567, 270], [877, 505, 270], [877, 580, 90], [841, 525, 0], [845, 525, 180], [727, 593, 180], [854, 593, 0],
  [686, 579, 0], [668, 603, 0], [728, 580, 315], [737, 623, 0], [740, 623, 180], [795, 615, 90], [770, 612, 180],
  [823, 651, 0], [831, 651, 180], [790, 630, 225], [782, 645, 315], [737, 664, 315], [815, 617, 135], [743, 634, 270],
];

const Sketch = () => (
  <Canvas width="966" height="662" viewBox="351 32 966 662">
    <path d="M618 223H719" stroke="#6b3a1c" strokeWidth="2" />
    <path d={blueLines} fill="none" stroke={INK} strokeWidth="2" />
    {points.map(([x, y], i) => (
      <circle key={i} cx={x} cy={y} r="3" fill={INK} />
    ))}
    <g transform="translate(0.5 0.5)">
      <path d="M481 140V214M582 140V230M618 225H719" stroke="#444" />
      <path d={blackLines} fill="none" stroke="#111" />
      {crosses.map(([x, y], i) => (
        <path key={i} d={`M${x - 4} ${y}h8M${x} ${y - 4}v8`} stroke={INK} />
      ))}
      {stars.map(([x, y], i) => (
        <path key={i} d={`M${x - 4} ${y}h8M${x} ${y - 4}v8M${x - 3} ${y - 3}l6 6M${x + 3} ${y - 3}l-6 6`} stroke={INK} />
      ))}
      {arrows.map(([x, y, a], i) => (
        <path key={i} d="M0 0L-11 -3V3z" transform={`translate(${x} ${y}) rotate(${a})`} fill="#000" />
      ))}
    </g>
    <path d="M721 505h12M727 499v12M723 501l8 8M731 501l-8 8" stroke="#000" strokeWidth="2" />
    {labels.map(([t, x, y, a = 0], i) => (
      <Label key={i} y="-1" transform={`translate(${x} ${y}) rotate(${a})`}>{t}</Label>
    ))}
    <g fill="#ff7f00" stroke="#ff7f00">
      <path d="M587 114H687M587 136H687" strokeWidth="2" />
      <path d="M684 94V156M684 114l-2-10h4zM684 136l-2 10h4z" />
      <Label y="-1" transform="translate(674 121) rotate(-90)" stroke="none">150</Label>
    </g>
    <path d="M394 634h17v4h-17z" fill="#e86464" stroke="#b01818" />
    <path d="M411 632l10 4-10 4z" fill="#c01414" />
    <path d="M389 640h4v18h-4z" fill="#6464e8" stroke="#1818b0" />
    <path d="M387 657h8l-4 9z" fill="#1414c0" />
    <circle cx="391" cy="636" r="5" fill="#144d14" />
    <text x="421" y="640" fill="#f00" fontSize="11" fontFamily="DejaVu Sans Mono">X</text>
    <text x="387" y="675" fill="#00f" fontSize="10" fontFamily="DejaVu Sans Mono">Z</text>
    <text x="362" y="689" fontSize="12" fontWeight="700" fontFamily="DejaVu Sans Mono">*Top</text>
  </Canvas>
);

/* ---------- bottom ---------- */

const SheetTabs = styled.div`
  display: flex;
  flex: none;
  height: 15px;
  border-top: 1px solid #888;
  line-height: 14px;
`;

const Nav = styled.button`
  width: 16px;
  height: 14px;
  border: 1px solid #888;
  background: #b4b4b4;
`;

const Sheet = styled.button`
  padding: 0 ${p => (p.$on ? 9 : 20)}px 0 ${p => (p.$on ? 15 : 9)}px;
  border: solid #888;
  border-width: 0 1px 0 0;
  background: ${p => (p.$on ? "none" : "#d3d3d3")};
  font-weight: ${p => (p.$on ? 700 : 400)};
  font-size: 11px;
  line-height: 13px;
`;

const Status = styled.footer`
  display: flex;
  align-items: center;
  flex: none;
  height: 20px;
  padding: 0 1px;
  border: solid #777;
  border-width: 1px 0;
  font-size: 11px;
  white-space: nowrap;
`;

const Cell = styled.span`
  ${p => (p.$w ? `width: ${p.$w}px;` : "flex: 1;")}
  padding-left: ${p => p.$pad || 0}px;
  ${p => p.$rule && "border-left: 1px solid #d0d0d0;"}
`;

const Taskbar = styled.div`
  display: flex;
  flex: none;
  height: 6px;
  overflow: hidden;
  background: linear-gradient(90deg, #8096b0, #7f96b2 80px, #a9c8e8 110px, #b3d0ee 75%, #8198b4 80%);
`;

const TaskButton = styled.div`
  display: flex;
  justify-content: center;
  flex: none;
  width: ${p => p.$w || 60}px;
  margin-left: ${p => p.$gap || 1}px;
  border: solid #555;
  border-width: ${p => (p.$bare ? 0 : "1px 1px 0")};
  border-radius: 3px 3px 0 0;
  background: ${p => (p.$bare ? "none" : "linear-gradient(90deg, #f2f6fa, #c5d8ec)")};
  &::after {
    content: "";
    width: 26px;
    height: 26px;
    margin-top: 3px;
    border-radius: 50%;
    background: ${p => p.$c || "none"};
  }
`;

// icon, drop-down arrow (1 active, 2 greyed), pressed; 0 is a rule
const left = [
  ["extrude", 1], ["cutGrey", 2], 0, ["fillet3d", 2], ["rib"], ["shell"], ["draft"], ["hole", 2], 0,
  ["patternGrey", 2], 0, ["plane", 1], ["curve", 1], 0, ["measure"],
];
const views = [
  ["cubeFront"], ["cubeTop"], ["cubeRight"], ["cubeLeft"], ["cubeBottom"], ["cubeBack"], ["iso"], 0,
  ["sketch"], ["repair"], ["convert"], 0, ["extrude"], ["cut"],
];
const right = [
  ["sketch", 1, true], ["dimension", 1], 0, ["line", 1], ["rect", 1], ["slot", 1], ["circle", 1], ["arc", 1],
  ["spline", 1], ["ellipse", 1], ["fillet", 1], ["polygon"], ["point"], ["planeGrey"], ["text"], 0,
  ["trim", 1], ["solid", 1], ["offset"], ["mirror"], ["pattern", 1], ["move", 1], 0,
  ["relations", 1], ["repair"], ["ringGrey", 2],
];

const BarItems = ({ items, rule, dropWidth }) =>
  items.map((item, i) =>
    item === 0 ? (
      <BarRule key={i} $w={rule} />
    ) : (
      <BarRow key={i}>
        <Tool aria-label={item[0]} $on={item[2]}><Icon name={item[0]} /></Tool>
        {item[1] && (
          <Drop aria-label={`${item[0]} menu`} $w={dropWidth} $on={item[2]}><Caret $muted={item[1] === 2} /></Drop>
        )}
      </BarRow>
    )
  );

const navArrows = [
  ["First tab", "M9 2v8L5 6z", "M3 2v8"],
  ["Previous tab", "M9 2v8L5 6z"],
  ["Next tab", "M5 2v8l4-4z"],
  ["Last tab", "M5 2v8l4-4z", "M11 2v8"],
];

const App = () => (
  <Page>
    <GlobalStyle />
    <TitleBar>
      <Logo>
        <Svg width="36" height="30" viewBox="0 0 36 30">
          <path
            d="M17 3h6q2 0 1 2-2 4-8 6 8-1 8 4-1 9-17 11l6-9M33 11h-5q-4 0-2 3l5 6q3 6-3 6h-6"
            fill="none"
            stroke="#d9261c"
            strokeWidth="2"
          />
        </Svg>
        <span><b>SOLID</b>WORKS</span>
      </Logo>
      <Menu>
        {["File", "Edit", "View", "Insert", "Tools", "Window", "Help"].map(m => <button key={m}>{m}</button>)}
        <button aria-label="pin menu"><Icon name="pin" /></button>
      </Menu>
      <Tools $gap={13}>
        {["newDoc", "open", "save", "print", "undo", "cursor"].map(n => (
          <React.Fragment key={n}>
            <Tool aria-label={n} $on={n === "cursor"}><Icon name={n} /></Tool>
            <Drop aria-label={`${n} menu`} $on={n === "cursor"}><Caret $muted={n === "undo"} /></Drop>
          </React.Fragment>
        ))}
        {["traffic", "options", "gear"].map(n => <Tool key={n} aria-label={n}><Icon name={n} /></Tool>)}
        <Drop aria-label="options menu"><Caret /></Drop>
      </Tools>
      <DocName>Sketch1 of plane_finalv4</DocName>
      <Search>
        <Icon name="help" />
        <input aria-label="Search help" placeholder="Search SOLIDWORKS Help" />
        <Icon name="glass" />
        <Caret $muted />
      </Search>
      <Tools $gap={4}>
        <Tool aria-label="Help"><Icon name="query" /></Tool>
        <Drop aria-label="Help menu"><Caret /></Drop>
        <Tool aria-label="Minimize"><Icon name="minimize" /></Tool>
        <Tool aria-label="Restore"><Icon name="restore" /></Tool>
        <Tool aria-label="Close"><Icon name="close" /></Tool>
      </Tools>
    </TitleBar>

    <Body>
      <Bar $w={49} $pad={3} $edge>
        <Grip $w={43} />
        <BarItems items={left} rule={41} dropWidth={17} />
      </Bar>
      <Bar $w={33} $pad={3} $left>
        <Grip $w={28} />
        <BarItems items={views} rule={26} />
      </Bar>
      <Center>
        <Work>
          <Panel>
            <PanelGrip><Dot /></PanelGrip>
            <PanelTabs>
              {["part", "list", "config", "target", "ball"].map(n => (
                <PanelTab key={n} aria-label={n} $on={n === "list"}><Icon name={n} /></PanelTab>
              ))}
            </PanelTabs>
            <PanelTitle>
              <h2>Properties</h2>
              <button aria-label="Help"><Icon name="help" /></button>
            </PanelTitle>
            <MessageHead>
              <h3>Message</h3>
              <Svg width="12" height="8" viewBox="0 0 12 8">
                <path d="M1 7l5-5 5 5" fill="none" stroke="#666" strokeWidth="2" />
              </Svg>
            </MessageHead>
            <Message>Select an entity to view or to modify its properties.</Message>
            <Splitter aria-label="Collapse panel"><Dot /></Splitter>
          </Panel>
          <Viewport>
            <Sketch />
            <Tooltip role="tooltip">D62@Sketch1</Tooltip>
            <ViewBar>
              <HeadsUp>
                {["zoomFit", "zoomArea", "prevView", "section", "viewCube", "display", "eye", "ballEdit", "scene", "monitor"].map(n => (
                  <React.Fragment key={n}>
                    <Tool aria-label={n}><Icon name={n} /></Tool>
                    {["viewCube", "display", "eye", "scene", "monitor"].includes(n) && (
                      <Drop aria-label={`${n} menu`} $w={14}><Caret $muted /></Drop>
                    )}
                  </React.Fragment>
                ))}
              </HeadsUp>
              {["paneLeft", "paneRight", "minimize", "restoreClear", "closeThin"].map(n => (
                <Tool key={n} aria-label={n}><Icon name={n} /></Tool>
              ))}
            </ViewBar>
            <Corner>
              <Svg width="76" height="64" viewBox="0 0 76 64">
                <path d="M24 4H4v17q0 7 8 7h14" fill="none" stroke="#a3b6c8" strokeWidth="2" />
                <path d="M26 28l9-9v5q8 0 11-6 1 13-11 14v5z" fill="#a9c3d4" stroke="#8fa9bd" strokeWidth="2" />
                <path d="M51 37l18 18M69 37L51 55" stroke="#cf9ba3" strokeWidth="8" />
              </Svg>
            </Corner>
            <TaskPane>
              {["home", "books", "folder", "palette", "ball", "list", "forum"].map(n => (
                <TaskTab key={n} aria-label={n} $on={n === "home"}><Icon name={n} /></TaskTab>
              ))}
            </TaskPane>
          </Viewport>
        </Work>
        <SheetTabs>
          {navArrows.map(([name, arrow, stop]) => (
            <Nav key={name} aria-label={name}>
              <Svg width="14" height="12" viewBox="0 0 14 12">
                <path d={arrow} fill="#888" />
                {stop && <path d={stop} stroke="#888" strokeWidth="2" />}
              </Svg>
            </Nav>
          ))}
          <Sheet $on>Model</Sheet>
          <Sheet>Motion Study 1</Sheet>
        </SheetTabs>
      </Center>
      <RightDock>
        <Bar $w={49} $pad={6} $flat>
          <Grip $w={43} />
          <BarItems items={right} rule={40} dropWidth={16} />
        </Bar>
        <More aria-label="More tools">
          <Svg width="40" height="14" viewBox="0 0 40 14">
            <path d="M17 3l4 4 4-4M17 7l4 4 4-4" fill="none" stroke="#333" />
          </Svg>
        </More>
      </RightDock>
    </Body>

    <Status>
      <Cell>SOLIDWORKS Student Edition - Academic Use Only</Cell>
      <Cell $w={89}>-18960.76mm</Cell>
      <Cell $w={76}>6343.45mm</Cell>
      <Cell $w={49}>0mm</Cell>
      <Cell $w={82}>Under Defined</Cell>
      <Cell $w={8} $rule>&nbsp;</Cell>
      <Cell $w={91} $pad={3} $rule>Editing Sketch1</Cell>
      <Cell $w={16} $rule>&nbsp;</Cell>
      <Cell $w={86} $pad={31} $rule>MMGS</Cell>
      <Svg width="8" height="6" viewBox="0 0 8 6"><path d="M1 5l3-4 3 4z" fill="#333" /></Svg>
      <Cell $w={63} />
      <Icon name="tag" />
    </Status>
    <Taskbar>
      <TaskButton $bare $w={54} $c="#c3dcee" />
      <TaskButton $bare $w={66} $c="#f1c840" />
      <TaskButton />
      <TaskButton $gap={64} $w={55} $c="#e0564a" />
      <TaskButton $gap={4} $w={124} $bare $c="#5cc0ea" />
      <TaskButton $c="#159a9a" />
      <TaskButton $c="#e0564a" />
      <TaskButton $c="#ff8080" />
      <TaskButton $c="#27aae1" />
      <TaskButton $c="#e0564a" />
      <TaskButton $c="#b01818" />
    </Taskbar>
  </Page>
);

export default App;
